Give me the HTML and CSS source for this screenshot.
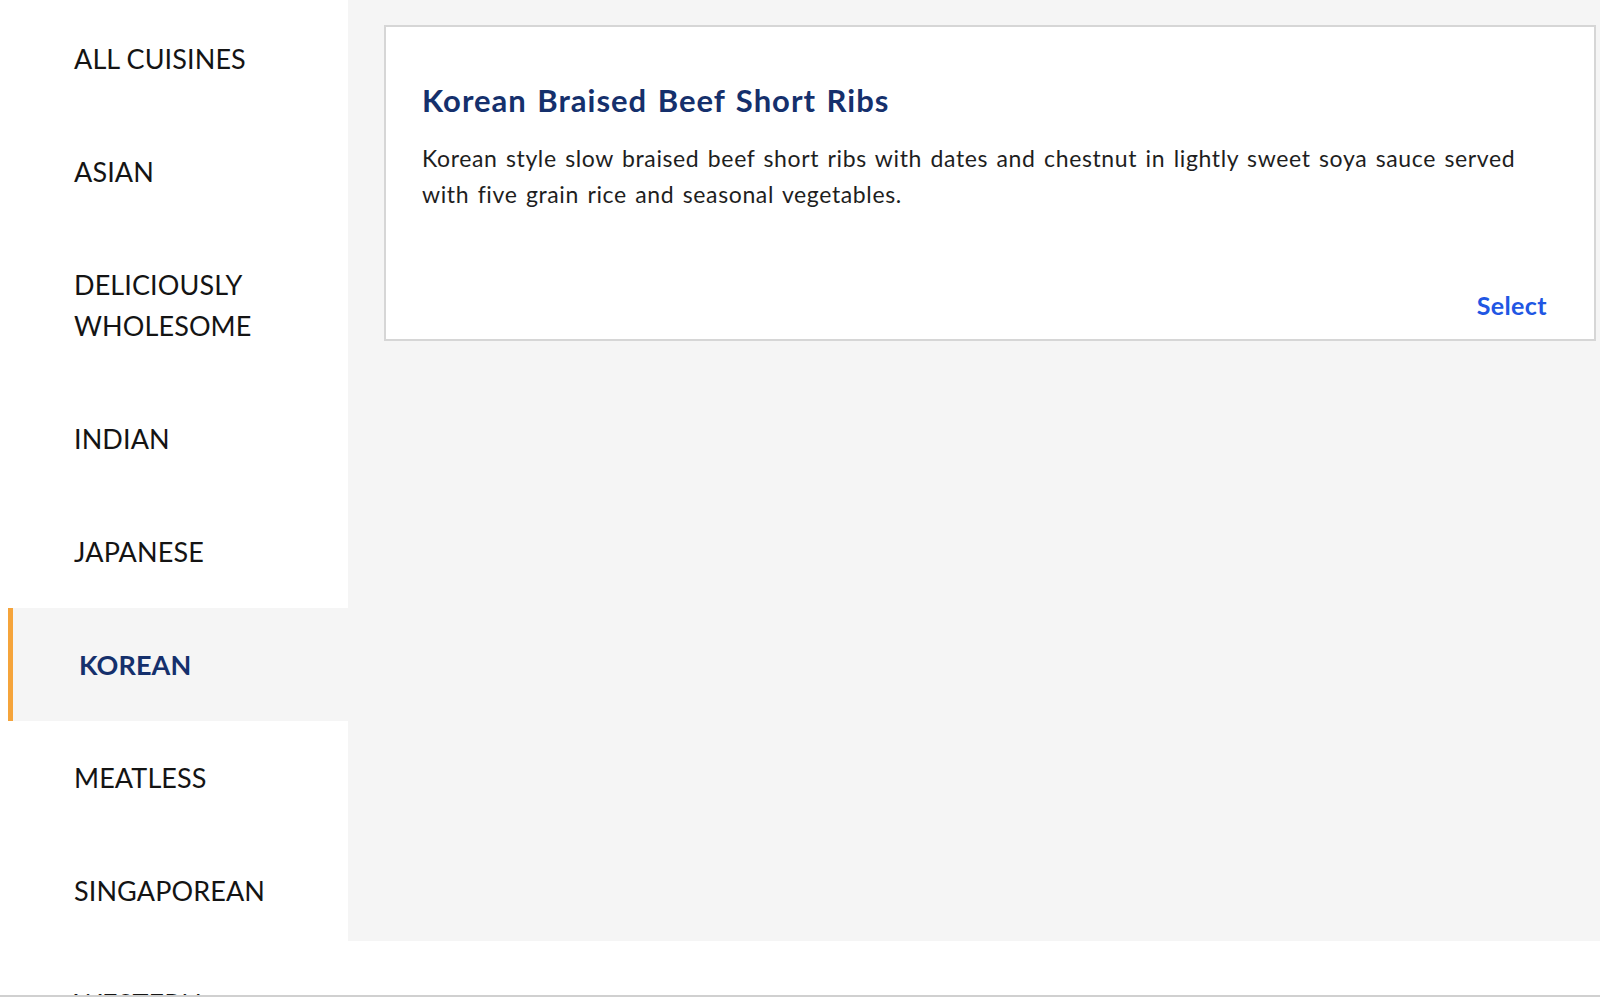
FILE: index.html
```html
<!DOCTYPE html>
<html lang="en">
<head>
<meta charset="utf-8">
<title>Cuisines</title>
<link rel="stylesheet" href="styles.css">
</head>
<body>
<div class="page">
  <nav class="sidebar">
    <ul class="cuisine-list">
      <li class="cuisine">ALL CUISINES</li>
      <li class="cuisine">ASIAN</li>
      <li class="cuisine">DELICIOUSLY<br>WHOLESOME</li>
      <li class="cuisine">INDIAN</li>
      <li class="cuisine">JAPANESE</li>
      <li class="cuisine active">KOREAN</li>
      <li class="cuisine">MEATLESS</li>
      <li class="cuisine">SINGAPOREAN</li>
      <li class="cuisine">WESTERN</li>
    </ul>
  </nav>
  <main class="content">
    <article class="dish-card">
      <h2 class="dish-title">Korean Braised Beef Short Ribs</h2>
      <p class="dish-desc">Korean style slow braised beef short ribs with dates and chestnut in lightly sweet soya sauce served with five grain rice and seasonal vegetables.</p>
      <a class="dish-select" href="#">Select</a>
    </article>
  </main>
</div>
</body>
</html>
```

FILE: styles.css
```css
* { box-sizing: border-box; }

html, body {
  margin: 0;
  padding: 0;
  background: #ffffff;
}

body {
  font-family: "Lato", "Open Sans", sans-serif;
  color: #1b1b1b;
}

.page {
  display: flex;
  align-items: flex-start;
  height: 997px;
  border-bottom: 2px solid #d0d0d0;
  overflow: hidden;
}

.sidebar {
  width: 348px;
  flex: 0 0 348px;
  height: 995px;
  overflow: hidden;
  background: #ffffff;
}

.cuisine-list {
  list-style: none;
  margin: 0;
  padding: 2px 0 0 8px;
}

.cuisine {
  display: flex;
  align-items: center;
  min-height: 113px;
  padding: 36px 0 36px 66px;
  font-size: 27px;
  line-height: 41px;
  color: #141414;
  letter-spacing: 0.1px;
}

.cuisine.active {
  background: #f5f5f5;
  border-left: 5px solid #f5a43b;
  color: #15306c;
  font-weight: 700;
}

.content {
  flex: 1 1 auto;
  height: 941px;
  background: #f5f5f5;
  padding: 25px 4px 0 36px;
}

.dish-card {
  display: flex;
  flex-direction: column;
  height: 316px;
  background: #ffffff;
  border: 2px solid #d6d6d6;
  padding: 53px 47px 19px 36px;
}

.dish-title {
  margin: 0;
  font-size: 31px;
  line-height: 40px;
  font-weight: 700;
  color: #15306c;
  letter-spacing: 1px;
  word-spacing: 2px;
}

.dish-desc {
  margin: 20px 0 0 0;
  font-size: 23px;
  line-height: 36px;
  color: #1e1e1e;
  letter-spacing: 0.62px;
  word-spacing: 2px;
}

.dish-select {
  margin-top: auto;
  align-self: flex-end;
  font-size: 25px;
  line-height: 30px;
  font-weight: 700;
  color: #2156e3;
  text-decoration: none;
  letter-spacing: 0.4px;
}
```
